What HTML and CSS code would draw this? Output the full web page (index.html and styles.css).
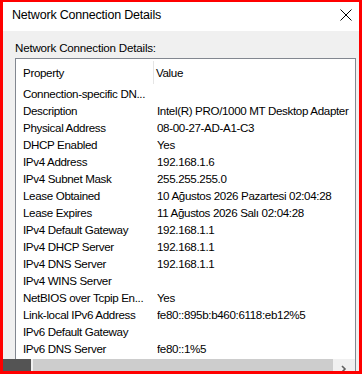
FILE: index.html
```html
<!DOCTYPE html>
<html>
<head>
<meta charset="utf-8">
<link rel="stylesheet" href="styles.css">
</head>
<body>
<div class="window">
  <div class="titlebar">
    <span class="title">Network Connection Details</span>
    <svg class="close" width="12" height="12" viewBox="0 0 12 12"><path d="M0.5 0.5 L11.5 11.5 M11.5 0.5 L0.5 11.5" stroke="#000" stroke-width="1" fill="none"/></svg>
  </div>
  <div class="content">
    <div class="label">Network Connection Details:</div>
    <div class="listview">
      <div class="header">
        <div class="hcol prop">Property</div>
        <div class="hcol val">Value</div>
      </div>
      <div class="rows">
        <div class="row"><span class="c1">Connection-specific DN...</span><span class="c2"></span></div>
        <div class="row"><span class="c1">Description</span><span class="c2">Intel(R) PRO/1000 MT Desktop Adapter</span></div>
        <div class="row"><span class="c1">Physical Address</span><span class="c2">08-00-27-AD-A1-C3</span></div>
        <div class="row"><span class="c1">DHCP Enabled</span><span class="c2">Yes</span></div>
        <div class="row"><span class="c1">IPv4 Address</span><span class="c2">192.168.1.6</span></div>
        <div class="row"><span class="c1">IPv4 Subnet Mask</span><span class="c2">255.255.255.0</span></div>
        <div class="row"><span class="c1">Lease Obtained</span><span class="c2">10 Ağustos 2026 Pazartesi 02:04:28</span></div>
        <div class="row"><span class="c1">Lease Expires</span><span class="c2">11 Ağustos 2026 Salı 02:04:28</span></div>
        <div class="row"><span class="c1">IPv4 Default Gateway</span><span class="c2">192.168.1.1</span></div>
        <div class="row"><span class="c1">IPv4 DHCP Server</span><span class="c2">192.168.1.1</span></div>
        <div class="row"><span class="c1">IPv4 DNS Server</span><span class="c2">192.168.1.1</span></div>
        <div class="row"><span class="c1">IPv4 WINS Server</span><span class="c2"></span></div>
        <div class="row"><span class="c1">NetBIOS over Tcpip En...</span><span class="c2">Yes</span></div>
        <div class="row"><span class="c1">Link-local IPv6 Address</span><span class="c2">fe80::895b:b460:6118:eb12%5</span></div>
        <div class="row"><span class="c1">IPv6 Default Gateway</span><span class="c2"></span></div>
        <div class="row"><span class="c1">IPv6 DNS Server</span><span class="c2">fe80::1%5</span></div>
      </div>
      <div class="hscroll">
        <div class="thumb"></div>
        <div class="arrow"><svg width="8" height="8" viewBox="0 0 8 8"><path d="M2 1 L5 4 L2 7" stroke="#606060" stroke-width="1.6" fill="none"/></svg></div>
      </div>
    </div>
  </div>
  <div class="darkblock"></div>
</div>
</body>
</html>
```
FILE: styles.css
```css
html, body {
  margin: 0;
  padding: 0;
  background: #ff0000;
}
.window {
  position: relative;
  width: 362px;
  height: 374px;
  box-sizing: border-box;
  border-style: solid;
  border-color: #ff0000;
  border-width: 2px 3px 3px 3px;
  overflow: hidden;
  background: #f0f0f0;
  font-family: "Liberation Sans", Arial, sans-serif;
  font-size: 11.6px;
  letter-spacing: -0.35px;
  color: #000;
}
.titlebar {
  height: 29px;
  background: #fff;
  display: flex;
  align-items: center;
  justify-content: space-between;
  padding: 0 7px 0 9px;
}
.title {
  font-size: 12.5px;
  letter-spacing: -0.2px;
  margin-top: -3px;
}
.close {
  margin-top: -3px;
}
.content {
  padding: 9px 3px 0 12px;
  display: flex;
  flex-direction: column;
}
.label {
  height: 18px;
  line-height: 16px;
  letter-spacing: -0.2px;
}
.listview {
  border: 1px solid #828790;
  border-bottom: none;
  background: #fff;
  display: flex;
  flex-direction: column;
}
.header {
  display: flex;
  height: 26px;
  align-items: stretch;
}
.hcol {
  display: flex;
  align-items: center;
  padding-left: 7px;
  box-sizing: border-box;
}
.hcol.prop {
  width: 138px;
  border-right: 1px solid #e5e5e5;
  margin: 2px 0 1px 0;
}
.hcol.val {
  padding-left: 2px;
  flex: 1;
}
.rows {
  display: flex;
  flex-direction: column;
}
.row {
  display: flex;
  height: 17px;
  line-height: 17px;
  white-space: nowrap;
}
.c1 {
  width: 134px;
  padding-left: 7px;
  flex: none;
}
.c2 {
  flex: 1;
  overflow: hidden;
}
.hscroll {
  margin-top: 2px;
  height: 14px;
  display: flex;
  background: #f0f0f0;
}
.thumb {
  margin-left: 17px;
  width: 300px;
  background: #cdcdcd;
}
.arrow {
  flex: 1;
  display: flex;
  align-items: center;
  justify-content: center;
  padding-top: 6px;
}
.darkblock {
  position: absolute;
  left: 0;
  top: 357px;
  width: 28px;
  height: 14px;
  background: #545454;
}
```
